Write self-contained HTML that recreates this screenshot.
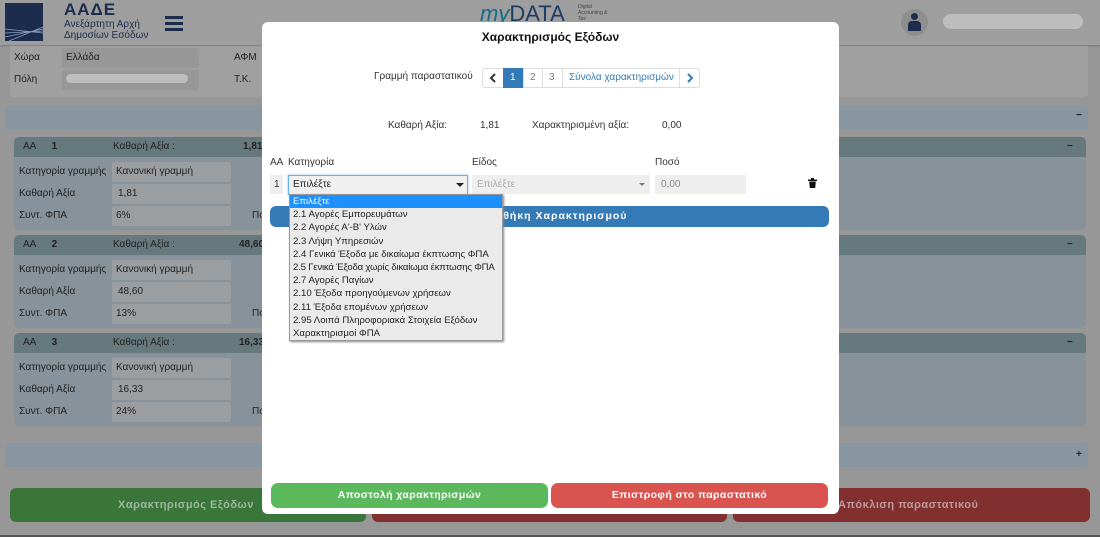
<!DOCTYPE html>
<html><head><meta charset="utf-8">
<style>
*{margin:0;padding:0;box-sizing:border-box}
body{width:1100px;height:537px;overflow:hidden;background:#979797;font-family:"Liberation Sans","DejaVu Sans",sans-serif;font-size:10px;color:#222;position:relative}
.a{position:absolute}
.t{position:absolute;white-space:nowrap;line-height:12px}
.box{position:absolute;background:#9a9ea0;border-radius:2px}
.ch{position:absolute;left:14px;width:1072px;height:20px;background:#667a7e;border-radius:5px 5px 0 0}
.cb{position:absolute;left:14px;width:1072px;background:#87929a;border-radius:0 0 5px 5px}
.m{position:absolute;left:262px;top:22px;width:577px;height:492px;background:#fff;border-radius:6px}
.dd div{height:13.2px;line-height:13.2px;padding-left:3px;font-size:9.6px;white-space:nowrap;overflow:hidden}
</style></head><body>
<!-- header -->
<div class="a" style="left:0;top:0;width:1100px;height:45px;background:#9e9e9e;box-shadow:0 1px 2px #777"></div>
<div class="a" style="left:5px;top:3px;width:38px;height:38px;background:#1c2c4d"></div>
<svg class="a" style="left:5px;top:3px" width="38" height="38"><path d="M0 26 L38 30 M0 30 L38 28 M0 34 L38 26 M4 38 L38 24" stroke="#8aa0c0" stroke-width="0.8" fill="none"/></svg>
<div class="t" style="left:64px;top:1px;font-size:17px;font-weight:bold;color:#1c2c4d;letter-spacing:1px;line-height:18px">ΑΑΔΕ</div>
<div class="t" style="left:64px;top:19px;font-size:10px;color:#1c2c4d;line-height:11px">Ανεξάρτητη Αρχή<br>Δημοσίων Εσόδων</div>
<div class="a" style="left:165px;top:16px;width:18px;height:3px;background:#1c2c4d"></div>
<div class="a" style="left:165px;top:22px;width:18px;height:3px;background:#1c2c4d"></div>
<div class="a" style="left:165px;top:28px;width:18px;height:3px;background:#1c2c4d"></div>
<div class="t" style="left:480px;top:2px;font-size:22px;color:#1c3c64;line-height:24px"><i style="color:#1a6a8a">my</i>DATA</div>
<div class="t" style="left:578px;top:4px;font-size:5px;color:#444;line-height:6px">Digital<br>Accounting &amp;<br>Tax</div>
<div class="a" style="left:901px;top:9px;width:27px;height:27px;border-radius:50%;background:#8e8e8e"></div>
<div class="a" style="left:911px;top:13px;width:7px;height:7px;border-radius:50%;background:#1c2c4d"></div>
<div class="a" style="left:908px;top:21px;width:13px;height:10px;border-radius:4px 4px 0 0;background:#1c2c4d"></div>
<div class="a" style="left:943px;top:14px;width:140px;height:15px;border-radius:8px;background:#bdbdbd"></div>
<!-- section 1 -->
<div class="a" style="left:10px;top:46px;width:1078px;height:51px;background:#a0a0a0;border-radius:0 0 4px 4px"></div>
<div class="t" style="left:14px;top:52px">Χώρα</div>
<div class="box" style="left:62px;top:48px;width:137px;height:20px;background:#979797"></div>
<div class="t" style="left:66px;top:52px">Ελλάδα</div>
<div class="t" style="left:14px;top:74px">Πόλη</div>
<div class="box" style="left:62px;top:70px;width:137px;height:20px;background:#979797"></div>
<div class="a" style="left:66px;top:74px;width:122px;height:9px;border-radius:5px;background:#bdbdbd"></div>
<div class="t" style="left:234px;top:52px">ΑΦΜ</div>
<div class="t" style="left:234px;top:74px">Τ.Κ.</div>
<!-- blue bar -->
<div class="a" style="left:5px;top:106px;width:1083px;height:24px;background:#8896a1;border-radius:4px"></div>
<div class="t" style="left:1076px;top:110px;font-weight:bold">−</div>
<!-- cards -->
<div class="ch" style="top:137px"></div><div class="cb" style="top:157px;height:73px"></div>
<div class="ch" style="top:235px"></div><div class="cb" style="top:255px;height:73px"></div>
<div class="ch" style="top:333px"></div><div class="cb" style="top:353px;height:73px"></div>
<div class="t" style="left:1067px;top:141px;font-weight:bold">−</div>
<div class="t" style="left:1067px;top:239px;font-weight:bold">−</div>
<div class="t" style="left:1067px;top:337px;font-weight:bold">−</div>
<div class="t" style="left:23px;top:141px">AA <b style="margin-left:13px">1</b></div>
<div class="t" style="left:113px;top:141px">Καθαρή Αξία :</div><div class="t" style="left:243px;top:141px;font-weight:bold">1,81</div>
<div class="t" style="left:23px;top:239px">AA <b style="margin-left:13px">2</b></div>
<div class="t" style="left:113px;top:239px">Καθαρή Αξία :</div><div class="t" style="left:239px;top:239px;font-weight:bold">48,60</div>
<div class="t" style="left:23px;top:337px">AA <b style="margin-left:13px">3</b></div>
<div class="t" style="left:113px;top:337px">Καθαρή Αξία :</div><div class="t" style="left:239px;top:337px;font-weight:bold">16,33</div>
<div class="box" style="left:112px;top:162px;width:119px;height:20px"></div>
<div class="box" style="left:112px;top:184px;width:119px;height:20px"></div>
<div class="box" style="left:112px;top:206px;width:119px;height:20px"></div>
<div class="box" style="left:112px;top:260px;width:119px;height:20px"></div>
<div class="box" style="left:112px;top:282px;width:119px;height:20px"></div>
<div class="box" style="left:112px;top:304px;width:119px;height:20px"></div>
<div class="box" style="left:112px;top:358px;width:119px;height:20px"></div>
<div class="box" style="left:112px;top:380px;width:119px;height:20px"></div>
<div class="box" style="left:112px;top:402px;width:119px;height:20px"></div>
<div class="t" style="left:19px;top:166px">Κατηγορία γραμμής</div><div class="t" style="left:116px;top:166px">Κανονική γραμμή</div>
<div class="t" style="left:19px;top:188px">Καθαρή Αξία</div><div class="t" style="left:118px;top:188px">1,81</div>
<div class="t" style="left:19px;top:210px">Συντ. ΦΠΑ</div><div class="t" style="left:116px;top:210px">6%</div><div class="t" style="left:252px;top:210px">Πο</div>
<div class="t" style="left:19px;top:264px">Κατηγορία γραμμής</div><div class="t" style="left:116px;top:264px">Κανονική γραμμή</div>
<div class="t" style="left:19px;top:286px">Καθαρή Αξία</div><div class="t" style="left:118px;top:286px">48,60</div>
<div class="t" style="left:19px;top:308px">Συντ. ΦΠΑ</div><div class="t" style="left:116px;top:308px">13%</div><div class="t" style="left:252px;top:308px">Πο</div>
<div class="t" style="left:19px;top:362px">Κατηγορία γραμμής</div><div class="t" style="left:116px;top:362px">Κανονική γραμμή</div>
<div class="t" style="left:19px;top:384px">Καθαρή Αξία</div><div class="t" style="left:118px;top:384px">16,33</div>
<div class="t" style="left:19px;top:406px">Συντ. ΦΠΑ</div><div class="t" style="left:116px;top:406px">24%</div><div class="t" style="left:252px;top:406px">Πο</div>
<div class="a" style="left:5px;top:443px;width:1083px;height:24px;background:#8896a1;border-radius:4px"></div>
<div class="t" style="left:1076px;top:449px;font-weight:bold">+</div>
<!-- bottom buttons -->
<div class="a" style="left:10px;top:488px;width:356px;height:34px;background:#3a763a;border-radius:6px"></div>
<div class="a" style="left:372px;top:488px;width:355px;height:34px;background:#82302f;border-radius:6px"></div>
<div class="a" style="left:733px;top:488px;width:357px;height:34px;background:#82302f;border-radius:6px"></div>
<div class="t" style="left:118px;top:499px;font-size:11px;color:#9fb59f;font-weight:bold;letter-spacing:0.5px">Χαρακτηρισμός Εξόδων</div>
<div class="t" style="left:838px;top:499px;font-size:11px;color:#bf9a9a;font-weight:bold;letter-spacing:0.5px">Απόκλιση παραστατικού</div>
<div class="a" style="left:0;top:535px;width:1100px;height:2px;background:#555"></div>
<!-- modal -->
<div class="m"></div>
<div class="t" style="left:262px;width:577px;text-align:center;top:31px;font-size:12px;font-weight:bold;color:#111">Χαρακτηρισμός Εξόδων</div>
<div class="t" style="left:374px;top:71px;color:#333">Γραμμή παραστατικού</div>
<div class="a" style="left:482px;top:68px;width:218px;height:20px;border:1px solid #ddd;border-radius:3px"></div>
<div class="a" style="left:503px;top:68px;width:20px;height:20px;background:#337ab7"></div>
<div class="a" style="left:523px;top:68px;width:1px;height:20px;background:#ddd"></div>
<div class="a" style="left:542px;top:68px;width:1px;height:20px;background:#ddd"></div>
<div class="a" style="left:562px;top:68px;width:1px;height:20px;background:#ddd"></div>
<div class="a" style="left:679px;top:68px;width:1px;height:20px;background:#ddd"></div>
<svg class="a" style="left:489px;top:73px" width="8" height="10"><path d="M6 1 L2 5 L6 9" stroke="#333" stroke-width="2" fill="none"/></svg>
<div class="t" style="left:510px;top:72px;color:#fff">1</div>
<div class="t" style="left:530px;top:72px;color:#777">2</div>
<div class="t" style="left:549px;top:72px;color:#777">3</div>
<div class="t" style="left:569px;top:72px;color:#337ab7">Σύνολα χαρακτηρισμών</div>
<svg class="a" style="left:686px;top:73px" width="8" height="10"><path d="M2 1 L6 5 L2 9" stroke="#337ab7" stroke-width="2" fill="none"/></svg>
<div class="t" style="left:388px;top:120px;color:#333">Καθαρή Αξία:</div>
<div class="t" style="left:480px;top:120px;color:#333">1,81</div>
<div class="t" style="left:532px;top:120px;color:#333">Χαρακτηρισμένη αξία:</div>
<div class="t" style="left:662px;top:120px;color:#333">0,00</div>
<div class="t" style="left:270px;top:157px;color:#333">AA</div>
<div class="t" style="left:288px;top:157px;color:#333">Κατηγορία</div>
<div class="t" style="left:472px;top:157px;color:#333">Είδος</div>
<div class="t" style="left:655px;top:157px;color:#333">Ποσό</div>
<div class="a" style="left:270px;top:175px;width:13px;height:19px;background:#eee"></div>
<div class="t" style="left:274px;top:179px;color:#333">1</div>
<div class="a" style="left:288px;top:175px;width:180px;height:20px;border:1px solid #66afe9;background:#f0f0f0;box-shadow:0 0 3px #9cc8ee"></div>
<div class="t" style="left:293px;top:179px;color:#222">Επιλέξτε</div>
<div class="a" style="left:456px;top:183px;border:4px solid transparent;border-top-color:#222;border-bottom:0"></div>
<div class="a" style="left:472px;top:175px;width:178px;height:19px;background:#eee"></div>
<div class="t" style="left:477px;top:179px;color:#aaa">Επιλέξτε</div>
<div class="a" style="left:639px;top:183px;border:3.5px solid transparent;border-top-color:#777;border-bottom:0"></div>
<div class="a" style="left:655px;top:175px;width:91px;height:19px;background:#eee;border-radius:2px"></div>
<div class="t" style="left:661px;top:179px;color:#888">0,00</div>
<svg class="a" style="left:808px;top:178px" width="9" height="10"><rect x="0" y="1.5" width="9" height="1.5" fill="#111"/><rect x="3" y="0" width="3" height="2" fill="#111"/><path d="M1.2 3.5 H7.8 L7.2 10 H1.8Z" fill="#111"/></svg>
<div class="a" style="left:270px;top:206px;width:559px;height:21px;background:#337ab7;border-radius:6px"></div>
<div class="t" style="left:270px;width:559px;text-align:center;top:210px;color:#fff;font-weight:bold;font-size:10.5px;letter-spacing:1px">Προσθήκη Χαρακτηρισμού</div>
<div class="a dd" style="left:289px;top:194px;width:214px;height:147px;background:#eaeaea;border:1px solid #999;box-shadow:1px 1px 2px #888;color:#222">
<div style="background:#1e8fff;color:#fff">Επιλέξτε</div>
<div>2.1 Αγορές Εμπορευμάτων</div>
<div>2.2 Αγορές Α'-Β' Υλών</div>
<div>2.3 Λήψη Υπηρεσιών</div>
<div>2.4 Γενικά Έξοδα με δικαίωμα έκπτωσης ΦΠΑ</div>
<div style="letter-spacing:-0.2px">2.5 Γενικά Έξοδα χωρίς δικαίωμα έκπτωσης ΦΠΑ</div>
<div>2.7 Αγορές Παγίων</div>
<div>2.10 Έξοδα προηγούμενων χρήσεων</div>
<div>2.11 Έξοδα επομένων χρήσεων</div>
<div>2.95 Λοιπά Πληροφοριακά Στοιχεία Εξόδων</div>
<div>Χαρακτηρισμοί ΦΠΑ</div>
</div>
<div class="a" style="left:271px;top:483px;width:277px;height:25px;background:#5cb85c;border-radius:7px"></div>
<div class="a" style="left:551px;top:483px;width:277px;height:25px;background:#d9534f;border-radius:7px"></div>
<div class="t" style="left:271px;width:277px;text-align:center;top:489px;color:#fff;font-weight:bold;font-size:10.5px;letter-spacing:0.4px">Αποστολή χαρακτηρισμών</div>
<div class="t" style="left:551px;width:277px;text-align:center;top:489px;color:#fff;font-weight:bold;font-size:10.5px;letter-spacing:0.4px">Επιστροφή στο παραστατικό</div>
</body></html>
